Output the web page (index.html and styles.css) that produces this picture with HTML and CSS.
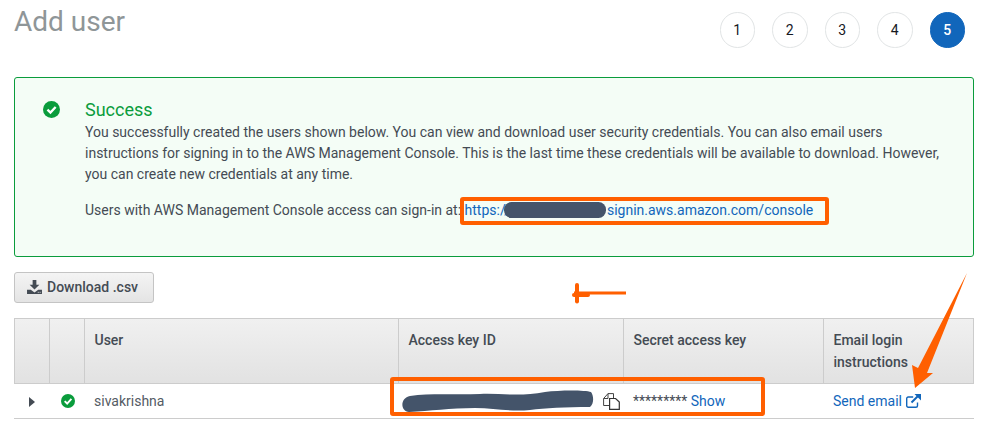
FILE: index.html
```html
<!DOCTYPE html>
<html lang="en">
<head>
<meta charset="utf-8">
<title>Add user</title>
<link rel="stylesheet" href="styles.css">
</head>
<body>
<main class="page">
  <header class="head">
    <h1 class="title">Add user</h1>
    <ol class="steps">
      <li class="step">1</li>
      <li class="step">2</li>
      <li class="step">3</li>
      <li class="step">4</li>
      <li class="step step-active">5</li>
    </ol>
  </header>

  <section class="alert">
    <svg class="alert-icon" viewBox="0 0 16 16" aria-hidden="true"><circle cx="8" cy="8" r="8" fill="#0a9c3c"/><path d="M4.200 8.200 7 10.900 11.900 5.600" fill="none" stroke="#fff" stroke-width="2.200"/></svg>
    <div class="alert-body">
      <h2 class="alert-title">Success</h2>
      <p class="alert-text">You successfully created the users shown below. You can view and download user security credentials. You can also email users instructions for signing in to the AWS Management Console. This is the last time these credentials will be available to download. However, you can create new credentials at any time.</p>
      <p class="alert-link-line">Users with AWS Management Console access can sign-in at: <a class="link url" href="#">https://<span class="url-gap"></span>signin.aws.amazon.com/console</a></p>
    </div>
  </section>

  <button class="download" type="button">
    <svg class="download-icon" viewBox="0 0 16 15" aria-hidden="true"><path d="M6 0h4v5h3.200L8 10.200 2.800 5H6zM0 10.500h4L8 13.500l4-3h4V15H0z" fill="#444b54"/><rect x="11.500" y="12.700" width="1" height="1" fill="#eee"/><rect x="13.500" y="12.700" width="1" height="1" fill="#eee"/></svg>
    <span class="download-label">Download .csv</span>
  </button>

  <table class="users">
    <colgroup>
      <col class="c-expand"><col class="c-status"><col class="c-user"><col class="c-key"><col class="c-secret"><col class="c-email">
    </colgroup>
    <thead>
      <tr>
        <th></th><th></th><th>User</th><th>Access key ID</th><th>Secret access key</th><th>Email login instructions</th>
      </tr>
    </thead>
    <tbody>
      <tr>
        <td class="cell-center"><span class="caret"></span></td>
        <td class="cell-center"><svg class="row-check" viewBox="0 0 16 16" aria-hidden="true"><circle cx="8" cy="8" r="8" fill="#0a9c3c"/><path d="M4.200 8.200 7 10.900 11.900 5.600" fill="none" stroke="#fff" stroke-width="2.200"/></svg></td>
        <td class="user-name">sivakrishna</td>
        <td class="key-cell"><svg class="copy" viewBox="0 0 17 17" aria-hidden="true"><path d="M7 12.500H.6V5.500L5 .6h5.500V5" fill="#fff" stroke="#444" stroke-width="1"/><path d="M5 .6v4.900H.6" fill="none" stroke="#444" stroke-width="1"/><path d="M6.600 5.500h6L16.300 9v7.400H6.600z" fill="#fff" stroke="#333" stroke-width="1.200"/></svg></td>
        <td>********* <a class="link" href="#">Show</a></td>
        <td><a class="link" href="#">Send email <svg class="ext" viewBox="0 0 15 14" aria-hidden="true"><path d="M11.500 8.500v3.300a1.500 1.500 0 0 1-1.500 1.500H2.200a1.500 1.500 0 0 1-1.500-1.500V4.500A1.500 1.500 0 0 1 2.200 3h5" fill="none" stroke="#1166bb" stroke-width="1.400"/><path d="M5.500 8.500 12 2" fill="none" stroke="#1166bb" stroke-width="2"/><path d="M8.500 0H15v6.500z" fill="#1166bb"/></svg></a></td>
      </tr>
    </tbody>
  </table>

  <svg class="marks" viewBox="0 0 996 432" aria-hidden="true">
    <rect x="504" y="202" width="102" height="16" rx="7.500" fill="#44546a"/>
    <path d="M410 396C430 393 455 395 480 394C500 393 520 397 545 392C560 390 585 390 591 392C594 396 594 404 590 407C565 407 545 408 530 410C510 412 495 408 475 408C450 408 430 411 409 412C400 411 400 398 410 396z" fill="#44546a"/>
    <rect x="462" y="199" width="365" height="24" rx="1" fill="none" stroke="#ff5f00" stroke-width="4"/>
    <rect x="392" y="379" width="371" height="35" rx="1" fill="none" stroke="#ff5f00" stroke-width="4"/>
    <path d="M574 293H626" stroke="#ff5f00" stroke-width="3" fill="none"/>
    <path d="M577 285V301.500" stroke="#ff5f00" stroke-width="4" stroke-linecap="round" fill="none"/>
    <path d="M574 295H588" stroke="#ff5f00" stroke-width="4" stroke-linecap="round" fill="none"/>
    <path d="M967 273 927 373 933 373 915 388 912 365 918 368z" fill="#ff5f00"/>
  </svg>
</main>
</body>
</html>
```
FILE: styles.css
```css
* { box-sizing: border-box; }
html, body { margin: 0; padding: 0; background: #fff; }
body { font-family: Roboto, "Liberation Sans", sans-serif; font-size: 14px; color: #444b54; overflow: hidden; }
.page { position: relative; width: 996px; height: 432px; padding: 0 22px 0 14px; overflow: hidden; }

.head { display: flex; justify-content: space-between; align-items: flex-start; height: 77px; }
.title { margin: 4px 0 0; font-size: 28px; line-height: 36px; font-weight: 400; color: #8f9698; }
.steps { display: flex; gap: 17px; list-style: none; margin: 12px 9px 0 0; padding: 0; }
.step { width: 35.500px; height: 35.500px; border: 1px solid #e1e4e5; border-radius: 50%; display: flex; align-items: center; justify-content: center; font-size: 14px; color: #16191f; }
.step-active { background: #1166bb; border-color: #1166bb; color: #fff; font-weight: 500; }

.alert { display: flex; height: 180px; border: 1px solid #0a9c3c; border-radius: 3px; background: #f4fdf6; padding: 22px 20px 0 28px; }
.alert-icon { width: 17px; height: 17px; margin-top: 1px; flex: none; }
.alert-body { margin-left: 25px; }
.alert-title { margin: 0 0 2px; font-size: 18px; line-height: 20px; font-weight: 400; color: #0a9c3c; }
.alert-text { margin: 0; line-height: 21px; width: 864px; color: #444b54; }
.alert-link-line { margin: 15px 0 0; line-height: 21px; }
.link { color: #1166bb; text-decoration: none; }
.url-gap { display: inline-block; width: 97px; height: 1px; }

.download { display: flex; align-items: center; gap: 5px; margin-top: 15px; width: 140px; height: 31px; padding: 0 0 2px 12px; border: 1px solid #c4c4c4; border-radius: 3px; background: linear-gradient(#f4f4f4, #e4e4e4); font: 500 14px Roboto, "Liberation Sans", sans-serif; color: #444b54; }
.download-icon { width: 15px; height: 14px; flex: none; }

.users { table-layout: fixed; border-collapse: separate; border-spacing: 0; width: 960px; margin-top: 15px; }
.c-expand { width: 36px; }
.c-status { width: 35px; }
.c-user { width: 314px; }
.c-key { width: 225px; }
.c-secret { width: 200px; }
.c-email { width: 150px; }
.users th { height: 66px; padding: 10px 9.500px 0; vertical-align: top; text-align: left; font-weight: 500; line-height: 22px; color: #444b54; background: linear-gradient(#f0f0f0, #e2e2e2); border: 1px solid #cccccc; border-left: 0; }
.users th:first-child { border-left: 1px solid #cccccc; }
.users td { height: 35px; padding: 0 9px; border-bottom: 1px solid #cccccc; vertical-align: middle; }
.users td.cell-center { padding: 0; text-align: center; }
.caret { display: inline-block; border-left: 6px solid #444b54; border-top: 5px solid transparent; border-bottom: 5px solid transparent; vertical-align: middle; }
.row-check { display: block; width: 14px; height: 14px; margin: 0 auto; }
.user-name { color: #545b64; }
.users td.key-cell { padding: 0 4px 0 0; text-align: right; }
.copy { width: 17px; height: 17px; display: inline-block; vertical-align: middle; }
.ext { width: 15px; height: 14px; vertical-align: -2px; margin-left: 1px; }

.marks { position: absolute; left: 0; top: 0; width: 996px; height: 432px; pointer-events: none; }
```
